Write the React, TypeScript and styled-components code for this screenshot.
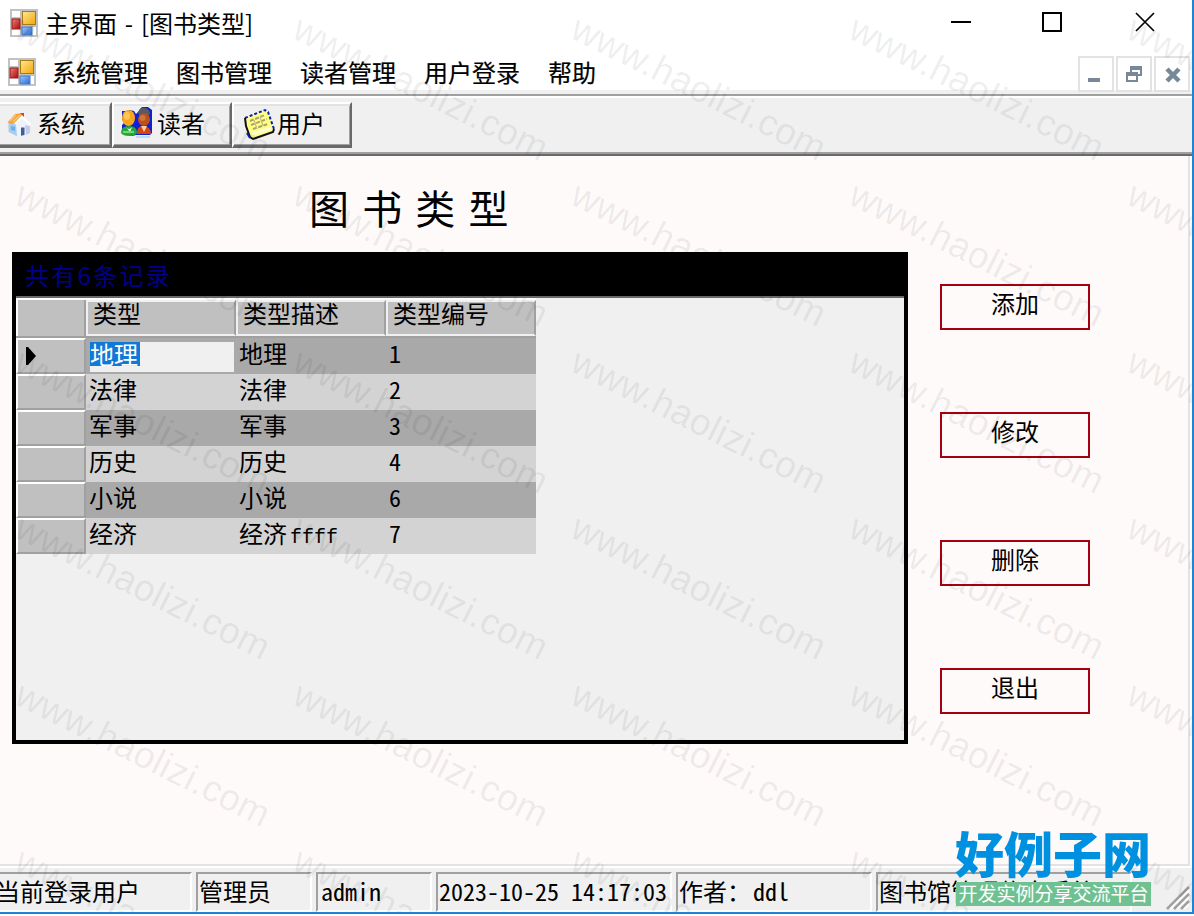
import React from 'react';
import styled, { createGlobalStyle } from 'styled-components';

const Global = createGlobalStyle`
  * { box-sizing: border-box; }
  body { margin: 0; background: #fff; overflow: hidden; }
`;

const Window = styled.div`
  position: relative;
  width: 1194px;
  height: 914px;
  display: flex;
  flex-direction: column;
  overflow: hidden;
  background: #f0f0f0;
  color: #000;
  border-right: 2px solid #1f83d6;
  border-bottom: 2px solid #1f83d6;
  font: 24px/36px 'Noto Sans CJK SC', sans-serif;
  white-space: nowrap;
`;

const TitleBar = styled.header`
  height: 48px;
  flex: none;
  display: flex;
  align-items: flex-start;
  background: #fff;
  padding: 9px 37px 0 10px;
`;

const Caption = styled.h1`
  margin: -4px 0 0 7px;
  flex: 1;
  font: 400 24px/36px 'Noto Sans CJK SC', sans-serif;
  word-spacing: 2.4px;
`;

const CaptionGlyphs = styled.div`
  display: flex;
  gap: 71px;
  margin-top: 3px;
  & > :last-child { margin-left: 2px; }
`;

const MenuBar = styled.nav`
  height: 46px;
  flex: none;
  display: flex;
  align-items: flex-start;
  padding: 8px 2px 0 8px;
  background: linear-gradient(#fff 42px, #f0f0f0 42px);
`;

const MenuIcon = styled.div`
  height: 28px;
  margin-top: 2px;
`;

const MenuItems = styled.div`
  display: flex;
  flex: 1;
  gap: 28px;
  margin: -2px 0 0 16px;
`;

const MenuItem = styled.span`
  -webkit-text-stroke: 0.2px #000;
`;

const ChildControls = styled.div`
  display: flex;
  gap: 2px;
`;

const ChildControl = styled.button`
  width: 36px;
  height: 36px;
  padding: 0;
  display: flex;
  background: #fff;
  border: 2px solid #e3e3e3;
`;

const ToolBar = styled.div`
  height: 62px;
  flex: none;
  display: flex;
  align-items: flex-start;
  border-top: 2px solid #a0a0a0;
  border-bottom: 4px solid #696969;
  border-image: linear-gradient(#a0a0a0 60px, #696969 60px) 4;
  box-shadow: inset 0 2px #fff;
  padding-top: 6px;
`;

const ToolButton = styled.button<{ $width: number; $gap: number; $left: number; $first?: boolean }>`
  width: ${(p) => p.$width}px;
  height: 46px;
  display: flex;
  align-items: flex-start;
  gap: ${(p) => p.$gap}px;
  padding: 3px 0 0 ${(p) => p.$left}px;
  border: solid;
  border-width: 2px 2px 3px ${(p) => (p.$first ? 0 : 2)}px;
  border-color: #fff #696969 #696969 #fff;
  background: #f0f0f0;
  box-shadow: inset 0 2px #e3e3e3, inset 0 -1px #a0a0a0, inset -1px 0 #a0a0a0;
  font: 24px/36px 'Noto Sans CJK SC', sans-serif;
  color: #000;
`;

const ToolLabel = styled.span`
  margin-top: -2px;
`;

const Client = styled.main`
  height: 712px;
  flex: none;
  display: flex;
  align-items: flex-start;
  background: #fffafa;
  border-right: 2px solid #fff;
  border-bottom: 2px solid #fff;
  box-shadow: inset -2px -2px #e3e3e3;
  padding-left: 12px;
`;

const MainColumn = styled.section`
  width: 896px;
`;

const Heading = styled.h2`
  height: 96px;
  margin: 0;
  padding: 22px 0 0 297px;
  font: 400 40px/58px 'Noto Sans CJK SC', sans-serif;
  word-spacing: 4.2px;
`;

const Grid = styled.div`
  height: 492px;
  border: 4px solid #000;
  background: #f0f0f0;
`;

const GridCaption = styled.div`
  height: 42px;
  padding: 1px 0 0 9px;
  background: #000;
  color: #00008b;
  border-bottom: 2px solid #696969;
  letter-spacing: 2.3px;
`;

const HeaderRow = styled.div`
  width: 520px;
  height: 40px;
  display: flex;
  background: #c0c0c0;
  border-top: 2px solid #fff;
  border-bottom: 2px solid #a0a0a0;
`;

const RowHeader = styled.div`
  width: 70px;
  flex: none;
  background: #c0c0c0;
  border-left: 2px solid #fff;
  border-right: 2px solid #a0a0a0;
  display: flex;
  align-items: center;
  padding-left: 8px;
`;

const ColumnHeader = styled.div`
  width: 150px;
  border: 2px solid #f0f0f0;
  border-right: 2px solid #a0a0a0;
  line-height: 36px;
  padding-left: 5px;
  display: flex;
  align-items: flex-start;
  & > span { margin-top: -7px; }
`;

const DataRow = styled.div<{ $dark: boolean }>`
  width: 520px;
  height: 36px;
  display: flex;
  background: ${(p) => (p.$dark ? '#a9a9a9' : '#d3d3d3')};

  & > ${RowHeader} {
    border-top: 2px solid #fff;
    border-bottom: 2px solid #a0a0a0;
  }
`;

const Cell = styled.div`
  width: 150px;
  padding-left: 3px;
  line-height: 30px;
`;

const Latin = styled.span`
  font-feature-settings: 'hwid';
`;

const Suffix = styled.span`
  margin-left: 3px;
  font: 20px/30px 'Liberation Mono', monospace;
`;

const CellEditor = styled.div`
  width: 144px;
  height: 30px;
  margin: 4px 2px 0 4px;
  background: #f0f0f0;
  line-height: 23px;
`;

const Selection = styled.span`
  display: inline-block;
  height: 24px;
  width: 50px;
  background: #1078d7;
  color: #fff;
  vertical-align: top;
`;

const Actions = styled.aside`
  display: flex;
  flex-direction: column;
  gap: 82px;
  padding: 128px 0 0 32px;
`;

const ActionButton = styled.button`
  width: 150px;
  height: 46px;
  padding: 0 0 8px;
  border: 2px solid #a5000f;
  background: transparent;
  color: #000;
  font: 24px/34px 'Noto Sans CJK SC', sans-serif;
`;

const StatusBar = styled.footer`
  height: 44px;
  flex: none;
  display: flex;
  gap: 4px;
  padding-top: 4px;
`;

const Panel = styled.div<{ $width: number; $first?: boolean }>`
  width: ${(p) => p.$width}px;
  height: 40px;
  flex: none;
  overflow: hidden;
  border: 2px solid;
  border-color: #a0a0a0 #fff #fff #a0a0a0;
  border-left-width: ${(p) => (p.$first ? 0 : 2)}px;
  padding-left: ${(p) => (p.$first ? 0 : 1)}px;
  text-indent: ${(p) => (p.$first ? -4 : 0)}px;
  line-height: 34px;
`;

const UserName = styled(Latin)`
  margin-left: 2px;
`;

const SizeGrip = styled.svg`
  position: absolute;
  right: 2px;
  bottom: 2px;
`;

const SiteLogo = styled.div`
  position: absolute;
  left: 955px;
  top: 827px;
  width: 197px;
`;

const SiteName = styled.div`
  height: 55px;
  color: #0090e0;
  font: 900 49px/50px 'Noto Sans CJK SC', sans-serif;
`;

const SiteSlogan = styled.div`
  height: 24px;
  margin-left: 1px;
  width: 195px;
  background: #70c191;
  color: #fff;
  text-align: center;
  font: 19px/22px 'Noto Sans CJK SC', sans-serif;
`;

const WatermarkLayer = styled.div`
  position: absolute;
  inset: 0;
  overflow: hidden;
  pointer-events: none;
`;

const Watermark = styled.span`
  position: absolute;
  font: 37px/40px 'Liberation Sans', sans-serif;
  letter-spacing: 0.4px;
  color: rgba(0, 0, 0, 0.08);
  transform-origin: 0 33px;
  transform: rotate(26.500deg);
`;

const FormIcon = () => (
  <svg width="28" height="28" viewBox="0 0 28 28">
    <defs>
      <linearGradient id="gold" x1="0" y1="0" x2="1" y2="1">
        <stop offset="0" stopColor="#ffe79a" />
        <stop offset="1" stopColor="#efa800" />
      </linearGradient>
      <linearGradient id="sky" x1="0" y1="0" x2="1" y2="1">
        <stop offset="0" stopColor="#9cc8ff" />
        <stop offset="1" stopColor="#2a67d0" />
      </linearGradient>
      <linearGradient id="ruby" x1="0" y1="0" x2="1" y2="1">
        <stop offset="0" stopColor="#ee8078" />
        <stop offset="1" stopColor="#a80808" />
      </linearGradient>
    </defs>
    <rect width="28" height="28" fill="#c2c2c2" />
    <path d="M2 2h8v6H2zM2 20h8v6H2zM14 18h12v8H14z" fill="#fff" />
    <rect x="2" y="10" width="8" height="10" fill="url(#ruby)" stroke="#9b1a16" />
    <rect x="12.5" y="2.5" width="13" height="13" fill="url(#gold)" stroke="#a87b12" />
    <rect x="12" y="18" width="10" height="8" fill="url(#sky)" stroke="#4677c9" />
  </svg>
);

const HomeIcon = () => (
  <svg width="26" height="32" viewBox="0 0 26 32">
    <path d="M2.500 16L10 14l1.500 15.500L2.500 25z" fill="#a4cdf0" />
    <path d="M5 19l4 1v4l-4-1z" fill="#6faee6" />
    <path d="M10 16l6-6 7.500 7.500.500 9L11 30z" fill="#eef2fb" />
    <path d="M19 18l5 1v7l-4 2z" fill="#c3cee6" />
    <path d="M15 20.500h3.500V28l-3.500.800z" fill="#3c5f9a" />
    <path d="M14 6h4v5h-4z" fill="#e03a30" />
    <path d="M1.500 15.500L9 7l6-.800 1.500 3L10 15l-4 2z" fill="#f9a23c" />
    <path d="M4 14l6-6M7 15l7-7" stroke="#ffc675" strokeWidth="1.200" />
    <path d="M9 17l7-7.500 8.500 8.500" fill="none" stroke="#fff" strokeWidth="2" />
  </svg>
);

const ReadersIcon = () => (
  <svg width="34" height="32" viewBox="0 0 34 32">
    <path d="M2 4h5l2-1 5 1 2 3 2-2 2-3 2-2h6l4 3v23l-2 2H16l-4 1-10-3V18l2-2-2-4z" fill="#0c22d4" />
    <path d="M18 6q2-6 7-5 5 1 5 6l-2 2h-8z" fill="#5a5a5e" />
    <ellipse cx="24" cy="12.500" rx="6" ry="6.500" fill="#b9501e" />
    <ellipse cx="22.500" cy="11" rx="3" ry="3" fill="#d2743a" />
    <path d="M17 27q0-9 7-8t7 8z" fill="#d8440f" />
    <path d="M21 19l3 6 3-6z" fill="#ffd199" />
    <ellipse cx="8.500" cy="11" rx="6.500" ry="8" fill="#f9a51e" />
    <ellipse cx="7" cy="9" rx="3" ry="4" fill="#ffc656" />
    <path d="M1 26q0-7 8-7t8 7q-2 3-8 3t-8-3z" fill="#25a73a" />
    <path d="M6 20q3 4 6 0l-2 5z" fill="#fff" />
    <path d="M3 25h11" stroke="#71d873" strokeWidth="2" />
    <path d="M16 30h14" stroke="#b9dcff" strokeWidth="2" />
  </svg>
);

const NoteIcon = () => (
  <svg width="32" height="34" viewBox="0 0 32 34">
    <path d="M2 11L22 3l3 2 6 17-1 3-20 7-3-2z" fill="#ffff86" />
    <path d="M2 11L22 3l3 2 6 17" fill="none" stroke="#0821b5" strokeWidth="2" strokeDasharray="3 2" />
    <path d="M2 11l1 8 4 11 3 2 20-7 1-3" fill="none" stroke="#111" strokeWidth="2" />
    <path d="M4 26l3 5" stroke="#0821b5" strokeWidth="2" />
    <path d="M9 27l19-6" stroke="#fffbd6" strokeWidth="3" />
    <path d="M7 14l15-6M8 18l16-6M10 22l15-5" stroke="#aaa46a" strokeWidth="2" strokeDasharray="4 1.500" />
    <path d="M11 13l3 9M17 10l3 9" stroke="#c4bd74" strokeWidth="1.200" />
  </svg>
);

const menus = ['系统管理', '图书管理', '读者管理', '用户登录', '帮助'];
const columns = ['类型', '类型描述', '类型编号'];
const rows: { name: string; note: string; suffix?: string; id: number }[] = [
  { name: '地理', note: '地理', id: 1 },
  { name: '法律', note: '法律', id: 2 },
  { name: '军事', note: '军事', id: 3 },
  { name: '历史', note: '历史', id: 4 },
  { name: '小说', note: '小说', id: 6 },
  { name: '经济', note: '经济', suffix: 'ffff', id: 7 },
];
const actions = ['添加', '修改', '删除', '退出'];
const markColumns = [15, 293, 571, 849, 1127];
const markRows = [0, 1, 2, 3, 4, 5];

export default function App() {
  return (
    <>
      <Global />
      <Window>
        <TitleBar>
          <FormIcon />
          <Caption>主界面 - [图书类型]</Caption>
          <CaptionGlyphs>
            <svg width="20" height="22"><path d="M0 10h20" stroke="#000" strokeWidth="2" /></svg>
            <svg width="20" height="22"><path d="M1 1h18v18H1z" fill="none" stroke="#000" strokeWidth="2" /></svg>
            <svg width="20" height="22"><path d="M1 1l18 18M19 1L1 19" stroke="#000" strokeWidth="1.700" /></svg>
          </CaptionGlyphs>
        </TitleBar>
        <MenuBar>
          <MenuIcon><FormIcon /></MenuIcon>
          <MenuItems>{menus.map((m) => <MenuItem key={m}>{m}</MenuItem>)}</MenuItems>
          <ChildControls>
            <ChildControl><svg width="32" height="32"><path d="M8 20h12v4H8z" fill="#778899" /></svg></ChildControl>
            <ChildControl>
              <svg width="32" height="32" fill="#778899">
                <path d="M12 8h12v10h-4v-2h2v-4h-8v2h-2z" />
                <path fillRule="evenodd" d="M8 14h12v10H8zM10 18v4h8v-4z" />
              </svg>
            </ChildControl>
            <ChildControl><svg width="32" height="32"><path d="M11 11l12 12M23 11L11 23" stroke="#778899" strokeWidth="4.500" /></svg></ChildControl>
          </ChildControls>
        </MenuBar>
        <ToolBar>
          <ToolButton $width={112} $gap={5} $left={6} $first><HomeIcon /><ToolLabel>系统</ToolLabel></ToolButton>
          <ToolButton $width={120} $gap={3} $left={6}><ReadersIcon /><ToolLabel>读者</ToolLabel></ToolButton>
          <ToolButton $width={120} $gap={2} $left={9}><NoteIcon /><ToolLabel>用户</ToolLabel></ToolButton>
        </ToolBar>
        <Client>
          <MainColumn>
            <Heading>图 书 类 型</Heading>
            <Grid>
              <GridCaption>共有6条记录</GridCaption>
              <HeaderRow>
                <RowHeader />
                {columns.map((c) => <ColumnHeader key={c}><span>{c}</span></ColumnHeader>)}
              </HeaderRow>
              {rows.map((r, i) => (
                <DataRow key={r.id} $dark={i % 2 === 0}>
                  <RowHeader>
                    {i === 0 && <svg width="10" height="18"><path d="M0 0h2l8 9-8 9H0z" /></svg>}
                  </RowHeader>
                  {i === 0
                    ? <CellEditor><Selection>{r.name}</Selection></CellEditor>
                    : <Cell>{r.name}</Cell>}
                  <Cell>{r.note}{r.suffix && <Suffix>{r.suffix}</Suffix>}</Cell>
                  <Cell><Latin>{r.id}</Latin></Cell>
                </DataRow>
              ))}
            </Grid>
          </MainColumn>
          <Actions>{actions.map((a) => <ActionButton key={a}>{a}</ActionButton>)}</Actions>
        </Client>
        <StatusBar>
          <Panel $width={192} $first>当前登录用户</Panel>
          <Panel $width={116}>管理员</Panel>
          <Panel $width={116}><UserName>admin</UserName></Panel>
          <Panel $width={236}><Latin>2023-10-25 14:17:03</Latin></Panel>
          <Panel $width={196}>作者：<UserName>ddl</UserName></Panel>
          <Panel $width={256}>图书馆管理信息系统</Panel>
        </StatusBar>
        <SizeGrip width="24" height="24" stroke="#a0a0a0" strokeWidth="2.500">
          <path d="M1 23L23 1M8 23L23 8M15 23l8-8" />
          <path d="M4 23L23 4M11 23l12-12M18 23l5-5" stroke="#fff" strokeWidth="1.500" />
        </SizeGrip>
        <WatermarkLayer>
          {markRows.map((r) => markColumns.map((x) => (
            <Watermark key={`${r}-${x}`} style={{ left: x - 3, top: 5 + r * 166.4 }}>www.haolizi.com</Watermark>
          )))}
        </WatermarkLayer>
        <SiteLogo>
          <SiteName>好例子网</SiteName>
          <SiteSlogan>开发实例分享交流平台</SiteSlogan>
        </SiteLogo>
      </Window>
    </>
  );
}
